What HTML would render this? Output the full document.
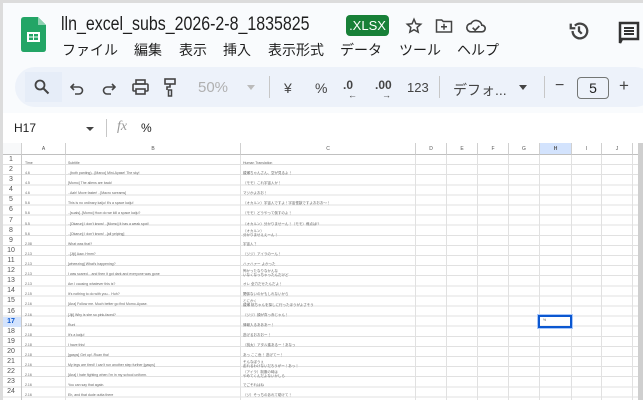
<!DOCTYPE html>
<html><head><meta charset="utf-8"><style>
*{margin:0;padding:0;box-sizing:border-box}
body{width:643px;height:400px;overflow:hidden;background:#f9fbfd;font-family:"Liberation Sans","Noto Sans CJK JP",sans-serif;position:relative;color:#1f1f1f}
.a{position:absolute;white-space:nowrap}
.frame{position:absolute;left:0;top:0;width:643px;height:400px;border-left:3px solid #dcdcdc;border-top:3px solid #dcdcdc;pointer-events:none}
.menu span{position:absolute;top:40px;font-size:14px}
.tb{position:absolute;top:67px;left:15px;width:640px;height:40px;background:#edf2fa;border-radius:20px}
.ti{position:absolute;top:80px;font-size:14px;color:#444}
.div{position:absolute;width:1px;background:#c7c7c7}
#grid{position:absolute;left:0;top:143px;width:643px;height:257px;background:#fff}
.ch{position:absolute;top:0;height:12px;font-size:5px;color:#555;text-align:center;line-height:12px;border-right:1px solid #d0d0d0;border-bottom:1px solid #c0c0c0;background:#fff}
.vl{position:absolute;top:12px;height:245px;width:1px;background:#e1e1e1}
.rows{position:absolute;left:0;top:12px;width:643px;height:245px;background:repeating-linear-gradient(to bottom,transparent 0,transparent 9.1px,#e1e1e1 9.1px,#e1e1e1 10.1px)}
.rn{position:absolute;left:0;width:22px;font-size:7px;color:#555;text-align:center;height:10px;line-height:10px}
.t{position:absolute;font-size:3.5px;color:#666;white-space:nowrap;line-height:4px}
</style></head><body>
<svg class="a" style="left:21px;top:17px" width="25" height="35" viewBox="0 0 25 35"><path d="M3 0H17L25 8V32Q25 35 22 35H3Q0 35 0 32V3Q0 0 3 0Z" fill="#23a566"/><path d="M17 0V8H25Z" fill="#8ed1b1"/><rect x="6" y="15" width="13" height="10" fill="#fff"/><rect x="8" y="17" width="4" height="2.5" fill="#23a566"/><rect x="13" y="17" width="4" height="2.5" fill="#23a566"/><rect x="8" y="20.5" width="4" height="2.5" fill="#23a566"/><rect x="13" y="20.5" width="4" height="2.5" fill="#23a566"/></svg>
<div class="a" style="left:61px;top:14px;font-size:19px;transform:scaleX(0.84);transform-origin:0 0">lln_excel_subs_2026-2-8_1835825</div>
<div class="a" style="left:346px;top:15px;width:43px;height:21px;background:#188038;border-radius:4px;color:#fff;font-size:13px;line-height:21px;text-align:center">.XLSX</div>
<svg class="a" style="left:405px;top:17px" width="18" height="18" viewBox="0 0 24 24"><path d="M12 3l2.6 6 6.4.6-4.8 4.3 1.4 6.3L12 17l-5.6 3.2 1.4-6.3L3 9.6 9.4 9z" fill="none" stroke="#444" stroke-width="2"/></svg>
<svg class="a" style="left:435px;top:18px" width="18" height="16" viewBox="0 0 24 20"><path d="M2 2h7l2 2h11v14H2z" fill="none" stroke="#444" stroke-width="2"/><path d="M12 7v8M8 11h8" stroke="#444" stroke-width="2"/></svg>
<svg class="a" style="left:466px;top:18px" width="20" height="16" viewBox="0 0 24 18"><path d="M6 16a5 5 0 0 1 0-10 7 7 0 0 1 13 2 4 4 0 0 1 0 8z" fill="none" stroke="#444" stroke-width="2"/><path d="M8 11l3 3 5-5" fill="none" stroke="#444" stroke-width="2"/></svg>
<svg class="a" style="left:568px;top:20px" width="22" height="22" viewBox="0 0 24 24"><path d="M5 12a8 8 0 1 0 2.5-5.8" fill="none" stroke="#444" stroke-width="2.5"/><path d="M3 4v5h5" fill="none" stroke="#444" stroke-width="2.5"/><path d="M12 7v5l3 3" fill="none" stroke="#444" stroke-width="2.5"/></svg>
<svg class="a" style="left:618px;top:21px" width="22" height="24" viewBox="0 0 22 24"><path d="M2 2h18v16H4l-2 4z" fill="none" stroke="#333" stroke-width="2.5"/><path d="M6 7h10M6 10h10M6 13h10" stroke="#333" stroke-width="2"/></svg>
<div class="menu"><span style="left:62px">ファイル</span><span style="left:134px">編集</span><span style="left:179px">表示</span><span style="left:223px">挿入</span><span style="left:268px">表示形式</span><span style="left:340px">データ</span><span style="left:399px">ツール</span><span style="left:457px">ヘルプ</span></div>
<div class="tb"></div>
<div class="a" style="left:25px;top:72px;width:37px;height:30px;background:#e6edf8"></div>
<svg class="a" style="left:34px;top:79px" width="16" height="16" viewBox="0 0 16 16"><circle cx="6" cy="6" r="4.5" fill="none" stroke="#444" stroke-width="1.8"/><path d="M9.5 9.5l5 5" stroke="#444" stroke-width="2"/></svg>
<svg class="a" style="left:70px;top:81px" width="14" height="14" viewBox="0 0 14 14"><path d="M4 3L1 6l3 3" fill="none" stroke="#444" stroke-width="1.6"/><path d="M1 6h8a3.5 3.5 0 0 1 0 7H5" fill="none" stroke="#444" stroke-width="1.6"/></svg>
<svg class="a" style="left:102px;top:81px" width="14" height="14" viewBox="0 0 14 14"><path d="M10 3l3 3-3 3" fill="none" stroke="#444" stroke-width="1.6"/><path d="M13 6H5a3.5 3.5 0 0 0 0 7h4" fill="none" stroke="#444" stroke-width="1.6"/></svg>
<svg class="a" style="left:132px;top:79px" width="17" height="16" viewBox="0 0 17 16"><rect x="4" y="1" width="9" height="4" fill="none" stroke="#444" stroke-width="1.6"/><rect x="1" y="5" width="15" height="7" rx="1" fill="none" stroke="#444" stroke-width="1.6"/><rect x="4" y="10" width="9" height="5" fill="#edf2fa" stroke="#444" stroke-width="1.6"/></svg>
<svg class="a" style="left:164px;top:78px" width="12" height="19" viewBox="0 0 12 19"><rect x="1" y="1" width="10" height="5" fill="none" stroke="#444" stroke-width="1.6"/><path d="M6 6v3h-3v3" fill="none" stroke="#444" stroke-width="1.6"/><rect x="4.5" y="12" width="3" height="6" fill="none" stroke="#444" stroke-width="1.5"/></svg>
<div class="ti" style="left:198px;top:79px;color:#b0b0b0;font-size:15px">50%</div>
<div class="a" style="left:247px;top:85px;border:4px solid transparent;border-top:5px solid #bbb"></div>
<div class="div" style="left:269px;top:76px;height:22px"></div>
<div class="ti" style="left:284px">¥</div>
<div class="ti" style="left:315px">%</div>
<div class="ti" style="left:343px;font-size:12px;font-weight:bold;top:78px">.0</div>
<div class="a" style="left:348px;top:90px;font-size:9px;color:#444">←</div>
<div class="ti" style="left:375px;font-size:12px;font-weight:bold;top:78px">.00</div>
<div class="a" style="left:382px;top:90px;font-size:9px;color:#444">→</div>
<div class="ti" style="left:407px;font-size:13px">123</div>
<div class="div" style="left:439px;top:76px;height:22px"></div>
<div class="ti" style="left:453px">デフォ...</div>
<div class="a" style="left:519px;top:85px;border:4px solid transparent;border-top:5px solid #444"></div>
<div class="div" style="left:544px;top:76px;height:22px"></div>
<div class="ti" style="left:555px;font-size:16px;top:77px">−</div>
<div class="a" style="left:577px;top:77px;width:32px;height:22px;border:1px solid #747775;border-radius:4px;font-size:14px;text-align:center;line-height:20px">5</div>
<div class="ti" style="left:619px;font-size:17px;top:76px">+</div>
<div class="a" style="left:0;top:113px;width:643px;height:30px;background:#fff"></div>
<div class="a" style="left:14px;top:121px;font-size:12px">H17</div>
<div class="a" style="left:86px;top:127px;border:4px solid transparent;border-top:4px solid #444"></div>
<div class="div" style="left:106px;top:119px;height:18px"></div>
<div class="a" style="left:117px;top:119px;font-size:14px;font-style:italic;color:#999;font-family:'Liberation Serif',serif">fx</div>
<div class="a" style="left:141px;top:121px;font-size:12px">%</div>
<div id="grid">
<div class="rows"></div>
<div class="ch" style="left:0;width:22px;background:#f8f9fa"></div>
<div class="ch" style="left:22px;width:44px">A</div>
<div class="ch" style="left:66px;width:175px">B</div>
<div class="ch" style="left:241px;width:175px">C</div>
<div class="ch" style="left:416px;width:31px">D</div>
<div class="ch" style="left:447px;width:31px">E</div>
<div class="ch" style="left:478px;width:31px">F</div>
<div class="ch" style="left:509px;width:31px">G</div>
<div class="ch" style="left:540px;width:32px;background:#d3e3fd;font-weight:bold">H</div>
<div class="ch" style="left:572px;width:30px">I</div>
<div class="ch" style="left:602px;width:31px">J</div>
<div class="ch" style="left:633px;width:10px"></div>
<div class="vl" style="left:21px;background:#c8c8c8"></div><div class="vl" style="left:65px"></div><div class="vl" style="left:240px"></div><div class="vl" style="left:415px"></div><div class="vl" style="left:446px"></div><div class="vl" style="left:477px"></div><div class="vl" style="left:508px"></div><div class="vl" style="left:539px"></div><div class="vl" style="left:571px"></div><div class="vl" style="left:601px"></div><div class="vl" style="left:632px"></div>
<div class="a" style="left:638px;top:0;width:5px;height:257px;background:#cfcfcf"></div>
<div class="a" style="left:0;top:174px;width:21px;height:10px;background:#d3e3fd"></div>
<div class="a" style="left:538px;top:172px;width:34px;height:13px;border:2px solid #0b57d0;box-shadow:0 0 0 1px #a8c7fa"></div>
<div class="rn" style="top:12px">1</div><div class="rn" style="top:22px">2</div><div class="rn" style="top:32px">3</div><div class="rn" style="top:42px">4</div><div class="rn" style="top:52px">5</div><div class="rn" style="top:62px">6</div><div class="rn" style="top:73px">7</div><div class="rn" style="top:83px">8</div><div class="rn" style="top:93px">9</div><div class="rn" style="top:103px">10</div><div class="rn" style="top:113px">11</div><div class="rn" style="top:123px">12</div><div class="rn" style="top:133px">13</div><div class="rn" style="top:143px">14</div><div class="rn" style="top:153px">15</div><div class="rn" style="top:164px">16</div><div class="rn" style="top:174px;color:#0b57d0;font-weight:bold">17</div><div class="rn" style="top:184px">18</div><div class="rn" style="top:194px">19</div><div class="rn" style="top:204px">20</div><div class="rn" style="top:214px">21</div><div class="rn" style="top:224px">22</div><div class="rn" style="top:234px">23</div><div class="rn" style="top:244px">24</div>
<div class="t" style="left:25px;top:18px">Time</div><div class="t" style="left:68px;top:18px">Subtitle</div><div class="t" style="left:243px;top:18px">Human Translation</div>
<div class="t" style="left:25px;top:28px">4.6</div><div class="t" style="left:68px;top:28px">..(both panting)...[Marco] Mini-Ayase! The sky!</div><div class="t" style="left:243px;top:28px">綾瀬ちゃんさん、空が見るよ！</div>
<div class="t" style="left:25px;top:38px">4.5</div><div class="t" style="left:68px;top:38px">[Momo] The aliens are back!</div><div class="t" style="left:243px;top:38px">（モモ）これ宇宙人か！</div>
<div class="t" style="left:25px;top:48px">4.6</div><div class="t" style="left:68px;top:48px">..Aah! Move faster! ..[Macro screams]</div><div class="t" style="left:243px;top:48px">マジかよおお！</div>
<div class="t" style="left:25px;top:58px">5.6</div><div class="t" style="left:68px;top:58px">This is no ordinary kaiju! It's a space kaiju!</div><div class="t" style="left:243px;top:58px">（オカルン）宇宙人ですよ！宇宙怪獣ですよおおお～！</div>
<div class="t" style="left:25px;top:68px">5.6</div><div class="t" style="left:68px;top:68px">..[suals]..[Momo] How do we kill a space kaiju?</div><div class="t" style="left:243px;top:68px">（モモ）どうやって倒すのよ！</div>
<div class="t" style="left:25px;top:79px">5.5</div><div class="t" style="left:68px;top:79px">..[Okarun] I don't know! ..[Momo] It has a weak spot!</div><div class="t" style="left:243px;top:79px">（オカルン）分かりませーん！（モモ）弱点は!?</div>
<div class="t" style="left:25px;top:89px">5.6</div><div class="t" style="left:68px;top:89px">..[Okarun] I don't know! ..[all yelping]</div><div class="t" style="left:243px;top:86px">（オカルン）<br>分かりませええーん！</div>
<div class="t" style="left:25px;top:99px">2.08</div><div class="t" style="left:68px;top:99px">What was that?</div><div class="t" style="left:243px;top:99px">宇宙人？</div>
<div class="t" style="left:25px;top:109px">2.13</div><div class="t" style="left:68px;top:109px">..[Jiji] Aaw..Hmm?</div><div class="t" style="left:243px;top:109px">（ジジ）アイラのーん！</div>
<div class="t" style="left:25px;top:119px">2.13</div><div class="t" style="left:68px;top:119px">[wheezing] What's happening?</div><div class="t" style="left:243px;top:119px">ハァハァー よかった</div>
<div class="t" style="left:25px;top:129px">2.13</div><div class="t" style="left:68px;top:129px">I was scared... and then it got dark and everyone was gone</div><div class="t" style="left:243px;top:126px">怖かったなりなかんな<br>いなくなっちゃったんだけど</div>
<div class="t" style="left:25px;top:139px">2.13</div><div class="t" style="left:68px;top:139px">Am I causing whatever this is?</div><div class="t" style="left:243px;top:139px">オレ 全力だせたんだよ！</div>
<div class="t" style="left:25px;top:149px">2.15</div><div class="t" style="left:68px;top:149px">It's nothing to do with you... Huh?</div><div class="t" style="left:243px;top:149px">関係ないのかもしれないから</div>
<div class="t" style="left:25px;top:159px">2.16</div><div class="t" style="left:68px;top:159px">[Ana] Follow me. Much better go find Momo-Ayase.</div><div class="t" style="left:243px;top:156px">とにかく<br>綾瀬 桃ちゃんを探しに行ったほうがよさそう</div>
<div class="t" style="left:25px;top:170px">2.16</div><div class="t" style="left:68px;top:170px">[Jiji] Why is she so pink-faced?</div><div class="t" style="left:243px;top:170px">（ジジ）顔が真っ赤じゃん！</div>
<div class="t" style="left:25px;top:180px">2.18</div><div class="t" style="left:68px;top:180px">Run!</div><div class="t" style="left:243px;top:180px">情報入るあああー！</div>
<div class="t" style="left:543px;top:175px">%</div>
<div class="t" style="left:25px;top:190px">2.18</div><div class="t" style="left:68px;top:190px">It's a kaiju!</div><div class="t" style="left:243px;top:190px">逃げるおおおー！</div>
<div class="t" style="left:25px;top:200px">2.18</div><div class="t" style="left:68px;top:200px">I have this!</div><div class="t" style="left:243px;top:200px">（桃太）アタル進あるー！あなっ</div>
<div class="t" style="left:25px;top:210px">2.18</div><div class="t" style="left:68px;top:210px">[gasps] Get up!..Ruan tha!</div><div class="t" style="left:243px;top:210px">あっ ここ危！ 逃げてー！</div>
<div class="t" style="left:25px;top:220px">2.16</div><div class="t" style="left:68px;top:220px">My legs are tired! I can't run another step further [gasps]</div><div class="t" style="left:243px;top:217px">そんなぼうぇ<br>走れるわけないだろうがー！あっ！</div>
<div class="t" style="left:25px;top:230px">2.16</div><div class="t" style="left:68px;top:230px">[Ana] I hate fighting when I'm in my school uniform.</div><div class="t" style="left:243px;top:227px">（アイラ）制服の時は<br>やめてくんだよないかしら</div>
<div class="t" style="left:25px;top:240px">2.16</div><div class="t" style="left:68px;top:240px">You can say that again.</div><div class="t" style="left:243px;top:240px">でごそれはね</div>
<div class="t" style="left:25px;top:250px">2.16</div><div class="t" style="left:68px;top:250px">Eh, and that dude outta there</div><div class="t" style="left:243px;top:250px">（ジ）そっちのあれて助けて！</div>
</div>
<div class="frame"></div>
</body></html>
